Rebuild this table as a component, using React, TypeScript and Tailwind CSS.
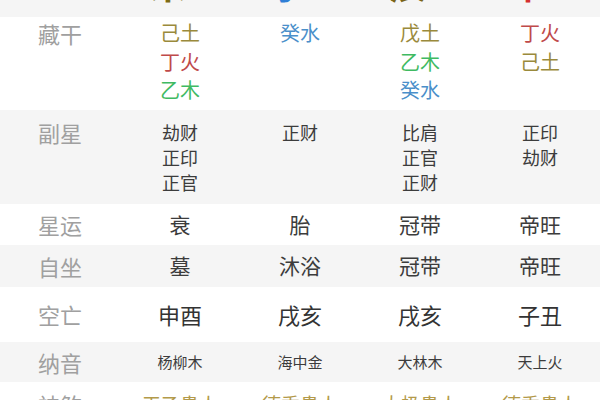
import React from "react";

const FONT = { fontFamily: '"Noto Sans CJK SC", "Noto Sans", sans-serif' };

type Stem = { t: string; c: string };

const OLIVE = "text-[#9a8a3c]";
const RED = "text-[#bf4a4a]";
const GREEN = "text-[#3fba62]";
const BLUE = "text-[#4a8fca]";

const BRANCHES = [
  { t: "未", c: "text-[#7d6b14]" },
  { t: "子", c: "text-[#2f7fd6]" },
  { t: "辰", c: "text-[#7a6418]" },
  { t: "午", c: "text-[#d42f2f]" },
];

const HIDDEN: Stem[][] = [
  [
    { t: "己土", c: OLIVE },
    { t: "丁火", c: RED },
    { t: "乙木", c: GREEN },
  ],
  [{ t: "癸水", c: BLUE }],
  [
    { t: "戊土", c: OLIVE },
    { t: "乙木", c: GREEN },
    { t: "癸水", c: BLUE },
  ],
  [
    { t: "丁火", c: RED },
    { t: "己土", c: OLIVE },
  ],
];

const STARS = [
  ["劫财", "正印", "正官"],
  ["正财"],
  ["比肩", "正官", "正财"],
  ["正印", "劫财"],
];

const Label = ({ children }: { children: React.ReactNode }) => (
  <div className="text-center text-[22px] text-[#a0a0a0]">{children}</div>
);

export default function App() {
  return (
    <div className="w-[600px] h-[400px] overflow-hidden bg-white" style={FONT}>
      {/* cut-off branch row */}
      <div className="grid grid-cols-5 h-[17px] overflow-hidden bg-[#f5f5f5]">
        <div />
        {BRANCHES.map((b, i) => (
          <div key={i} className="text-center pr-6">
            <span className={`block -mt-[35px] text-[36px] leading-none font-bold ${b.c}`}>{b.t}</span>
          </div>
        ))}
      </div>

      {/* 藏干 */}
      <div className="grid grid-cols-5 h-[93px] pt-[2px] leading-[28.5px] bg-white">
        <Label>藏干</Label>
        {HIDDEN.map((col, i) => (
          <div key={i} className="flex flex-col items-center text-[20px]">
            {col.map((s, j) => (
              <span key={j} className={s.c}>
                {s.t}
              </span>
            ))}
          </div>
        ))}
      </div>

      {/* 副星 */}
      <div className="grid grid-cols-5 h-[94px] pt-[10px] leading-[25px] bg-[#f5f5f5]">
        <Label>副星</Label>
        {STARS.map((col, i) => (
          <div key={i} className="flex flex-col items-center text-[18px] text-[#3c3c3c]">
            {col.map((s, j) => (
              <span key={j}>{s}</span>
            ))}
          </div>
        ))}
      </div>

      {/* 星运 */}
      <div className="grid grid-cols-5 items-center h-[41px] bg-white">
        <Label>星运</Label>
        {["衰", "胎", "冠带", "帝旺"].map((v) => (
          <div key={v} className="text-center text-[21px] text-[#3c3c3c]">
            {v}
          </div>
        ))}
      </div>

      {/* 自坐 */}
      <div className="grid grid-cols-5 items-center h-[42px] bg-[#f5f5f5]">
        <Label>自坐</Label>
        {["墓", "沐浴", "冠带", "帝旺"].map((v, i) => (
          <div key={i} className="text-center text-[21px] text-[#3c3c3c]">
            {v}
          </div>
        ))}
      </div>

      {/* 空亡 */}
      <div className="grid grid-cols-5 items-center h-[55px] bg-white">
        <Label>空亡</Label>
        {["申酉", "戌亥", "戌亥", "子丑"].map((v, i) => (
          <div key={i} className="text-center text-[22px] text-[#333]">
            {v}
          </div>
        ))}
      </div>

      {/* 纳音 */}
      <div className="grid grid-cols-5 items-center h-[40px] bg-[#f5f5f5]">
        <Label>纳音</Label>
        {["杨柳木", "海中金", "大林木", "天上火"].map((v) => (
          <div key={v} className="text-center text-[15px] text-[#3c3c3c]">
            {v}
          </div>
        ))}
      </div>

      {/* 神煞 */}
      <div className="grid grid-cols-5 pt-[8px] leading-[28px] bg-white">
        <Label>神煞</Label>
        {["天乙贵人", "德秀贵人", "太极贵人", "德秀贵人"].map((v, i) => (
          <div key={i} className="text-center text-[19px] text-[#b39a4a]">
            {v}
          </div>
        ))}
      </div>
    </div>
  );
}
